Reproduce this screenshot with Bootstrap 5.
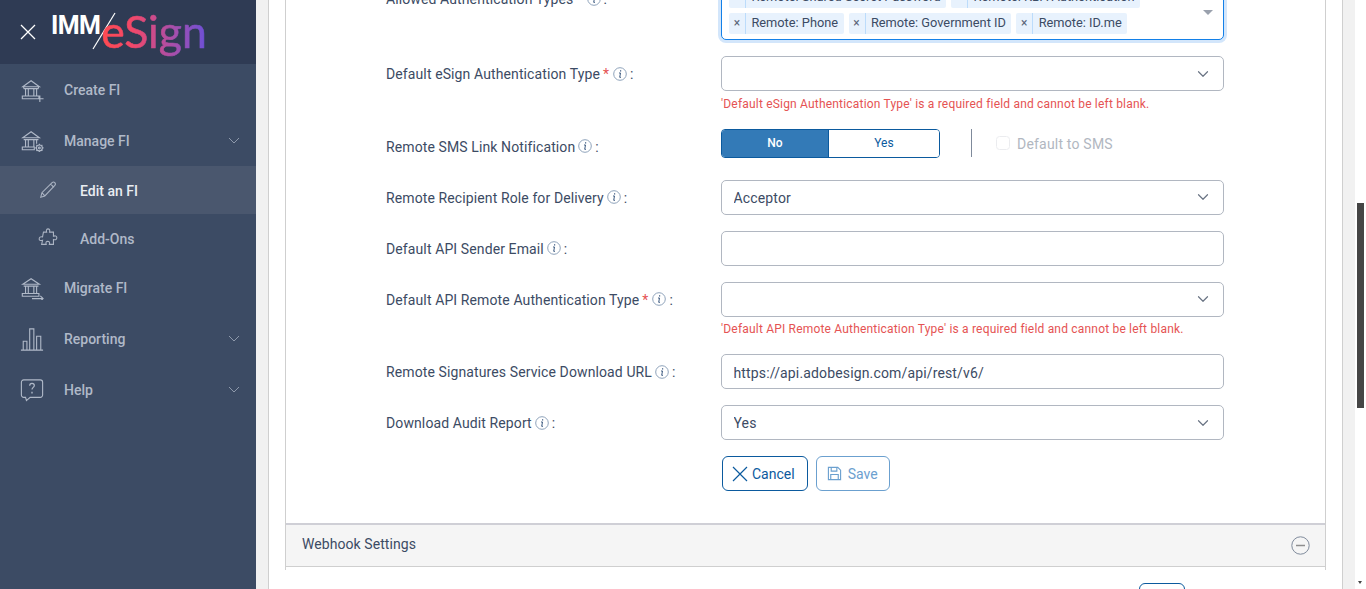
<!DOCTYPE html>
<html lang="en">
<head>
<meta charset="utf-8">
<title>IMM eSign</title>
<link href="https://cdn.jsdelivr.net/npm/bootstrap@5.3.0/dist/css/bootstrap.min.css" rel="stylesheet">
<style>
html,body{height:100%;overflow:hidden;margin:0}
body{font-family:Roboto,"Liberation Sans",sans-serif;font-size:14px;color:#3c4b64;background:#fff}
.shell{height:589px;overflow:hidden}
.side{width:256px;flex:none;background:#3c4b64;color:#b0b9c8}
.side-head{height:64px;background:#2f3b54;padding-left:20px;gap:15px}
.logo-imm{font-family:Roboto,sans-serif;font-weight:700;font-size:25px;color:#fff;letter-spacing:-.6px;line-height:1;margin-top:-14px}
.logo-slash{margin:-3px -15px 0 -8px;flex:none}
.logo-es{font-family:Lato,Roboto,sans-serif;font-size:44.500px;line-height:1;font-weight:400;background:linear-gradient(90deg,#ff4a50 0%,#f2486a 30%,#a44fae 70%,#6c50d8 100%);-webkit-background-clip:text;background-clip:text;color:transparent;-webkit-text-stroke:.6px transparent;margin-top:4px;padding-bottom:6px}
.menu-item{height:51px;padding:2px 16px 0 20px;font-weight:500;color:#b0b9c8}
.menu-item .ico{width:24px;height:24px;flex:none;margin:-2px 20px 0 0}
.menu-sub{height:48px;padding-left:38px}
.menu-sub .ico{width:20px;height:20px;margin-right:22px}
.menu-cur{background:#4a576e;color:#e9edf2}
.chev{width:12px;height:7px;margin:-2px 0 0 auto}
.work{flex:1 1 auto;min-width:0;background:#f1f1f1;padding:0 12px;overflow:hidden}
.sheet{background:#fff;border-left:1px solid #cfcfcf;border-right:1px solid #cfcfcf;height:589px;padding:0 16px;overflow:hidden}
.pane{border-left:1px solid #cfcfcf;border-right:1px solid #cfcfcf;height:589px}
.form-zone{padding:0 0 32px 100px;margin-top:-19px}
.f-row{display:flex;margin-bottom:16px;align-items:flex-start}
.f-label{width:335px;flex:none;min-height:35px;padding-top:2px;display:flex;align-items:center;color:#3c4b64;white-space:nowrap;letter-spacing:.11px}
.f-field{width:503px;flex:none}
.req{color:#e55353;margin:0 1px 0 3px}
.tip{width:14px;height:14px;margin:0 3px 2px 3px;flex:none}
.form-select,.form-control{height:35px;font-size:14px;color:#3c4b64;border-color:#b1b7c1;border-radius:5px;padding:2px 36px 0 11.500px;box-shadow:none;letter-spacing:.15px}
.form-select{background-image:url("data:image/svg+xml,%3csvg xmlns='http://www.w3.org/2000/svg' viewBox='0 0 16 16'%3e%3cpath fill='none' stroke='%236b7585' stroke-linecap='round' stroke-linejoin='round' stroke-width='1.6' d='m2 5 6 6 6-6'/%3e%3c/svg%3e")}
.form-control{padding-right:12px}
.err{color:#e55353;font-size:12px;line-height:18px;padding-top:3.500px;height:21.500px;letter-spacing:.19px}
.multi{border:1px solid #1380e8;border-radius:5px;box-shadow:0 0 0 3px #d3e6fb;padding:5px 7px;display:flex;flex-wrap:wrap;gap:5px;position:relative;background:#fff}
.tagx{display:flex;height:21px;background:#e8f2fd;border-radius:2px;font-size:12.800px;line-height:19.500px;color:#3c4b64}
.tagx i{font-style:normal;width:17px;text-align:center;border-right:1px solid #bcdcfb;color:#5a6578;font-size:12px;line-height:21px;flex:none}
.tagx span{padding:0 5.400px}
.caretx{position:absolute;right:10px;top:28px;width:0;height:0;border:5px solid transparent;border-top:5px solid #9aa1ad;border-bottom:0}
.swap{width:219px;height:29px;border:1px solid #0b5a9e;border-radius:4px;overflow:hidden}
.swap .btn{flex:1 0 auto;height:27px;padding:0;font-size:12px;border:0;border-radius:0;line-height:25px}
.swap .on{background:#337ab7;color:#fff;width:107px;flex:none;border-right:1px solid #0b5a9e;font-weight:500}
.swap .off{background:#fff;color:#0b5a9e;font-weight:400}
.vbar{width:1px;height:28px;background:#7f8a9b;margin:0 24px 0 31px}
.smsbox{color:#b1b7c1;font-size:14px;letter-spacing:.2px;padding-top:7px;gap:7px;height:29px}
.smsbox .form-check-input{width:14px;height:14px;margin:0;border-color:#d8dbe0;float:none}
.smsbox span{line-height:14px;padding-top:1px}
.act{height:35px;font-size:14px;background:#fff;border:1px solid #0b5a9e;color:#0b5a9e;border-radius:6px;padding:2px 12px 0 9px;display:inline-flex;align-items:center;gap:4px}
.act svg{flex:none;margin-top:-2px}
.act-off{border-color:#6ba0cf;color:#6ba0cf;width:74px;padding-left:10px;gap:6px}
.acc-head{height:44px;border-top:2px solid #cfcfd6;border-bottom:1px solid #cfcfcf;background:#f5f5f5;padding:0 15px 2px 16px;letter-spacing:.07px;color:#3c4b64}
.acc-head svg{margin-top:2px}
.peek{display:flex;justify-content:flex-end;padding:16px 140px 0 0}
.peek-btn{width:46px;height:40px;border:1px solid #0b5a9e;border-radius:6px;background:#fff}
.bar{width:11px;flex:none;background:#fff;padding-top:203px;position:relative}
.thumb{width:7px;height:205px;background:#454545;margin-left:2px}
.arrow{position:absolute;left:3px;bottom:5px;width:0;height:0;border:2.500px solid transparent;border-top:3px solid #454545;border-bottom:0}
.defs-holder{height:0}
</style>
</head>
<body>
<div class="shell d-flex">
  <aside class="side">
    <div class="side-head d-flex align-items-center">
      <svg width="16" height="16" viewBox="0 0 16 16" fill="none" stroke="#fff" stroke-width="1.3"><path d="M1 1l14 14M15 1L1 15"/></svg>
      <div class="d-flex align-items-center">
        <span class="logo-imm">IMM</span>
        <svg class="logo-slash" width="24" height="38" viewBox="0 0 24 38" fill="none" stroke="#fff" stroke-width="1.2"><path d="M23 1L1 37"/></svg>
        <span class="logo-es">eSign</span>
      </div>
    </div>
    <div class="menu-item d-flex align-items-center">
      <svg class="ico" viewBox="0 0 26 26" fill="none" stroke="#b0b9c8" stroke-width="1.200"><path d="M3 9.500L12 3l9 6.500zM4 11.500h16M4 9.500v2M20 9.500v2M6 12v7M9 12v7M15 12v7M18 12v7M2.500 19.500h18v3h-18zM21.500 19v7M18 22.500h7.500"/></svg>
      <span>Create FI</span>
    </div>
    <div class="menu-item d-flex align-items-center">
      <svg class="ico" viewBox="0 0 26 26" fill="none" stroke="#b0b9c8" stroke-width="1.200"><path d="M3 9.500L12 3l9 6.500zM4 11.500h16M6 12v7M9 12v7M15 12v7M18 12v4M2.500 19.500h13v3h-13z"/><circle cx="21" cy="20.500" r="3.200"/><circle cx="21" cy="20.500" r="1"/><path d="M21 16v1.300M21 23.700V25M16.500 20.500h1.300M24.200 20.500h1.300M17.800 17.300l1 1M23.200 22.700l1 1M17.800 23.700l1-1M23.200 18.300l1-1"/></svg>
      <span>Manage FI</span>
      <svg class="chev" viewBox="0 0 12 7" fill="none" stroke="#8e99ab" stroke-width="1"><path d="M1 1l5 5 5-5"/></svg>
    </div>
    <div class="menu-item menu-sub menu-cur d-flex align-items-center">
      <svg class="ico" viewBox="0 0 22 22" fill="none" stroke="#aab3c2" stroke-width="1.200"><path d="M3 19l1.300-5L15.500 3c1-1 2.200-1 3 0 .9.800.9 2 0 3L7.500 17.500zM4.300 14l3.200 3.500M14 4.500l3.500 3.500"/></svg>
      <span>Edit an FI</span>
    </div>
    <div class="menu-item menu-sub d-flex align-items-center">
      <svg class="ico" viewBox="0 0 22 22" fill="none" stroke="#aab3c2" stroke-width="1.200"><path d="M6 4.500h3.500C8.700 2 9.700 1 11 1s2.500 1 1.700 3.500H17v4.500c2.500-.8 3.700 0 3.700 1.800S19.500 13.500 17 12.700V18h-4.500c.8-2.500-.3-3.300-1.800-3.300S8.200 15.700 9 18H4l1-4.500C2.500 14.300 1.300 13.500 1.300 12S2.500 9 5 9.800z"/></svg>
      <span>Add-Ons</span>
    </div>
    <div class="menu-item d-flex align-items-center">
      <svg class="ico" viewBox="0 0 26 26" fill="none" stroke="#b0b9c8" stroke-width="1.200"><path d="M3 9L12 3l9 6zM4 11h16M6 11.500v7M9 11.500v7M15 11.500v7M18 11.500v7M2.500 19h18v3h-18zM13 24.500h12M22 21.500l3 3-3 3"/></svg>
      <span>Migrate FI</span>
    </div>
    <div class="menu-item d-flex align-items-center">
      <svg class="ico" viewBox="0 0 26 26" fill="none" stroke="#b0b9c8" stroke-width="1.200"><path d="M1 25h24M3.500 24.500v-9h4v9M10.500 24.500V2h4.500v22.500M18 24.500V10h4.500v14.500"/></svg>
      <span>Reporting</span>
      <svg class="chev" viewBox="0 0 12 7" fill="none" stroke="#8e99ab" stroke-width="1"><path d="M1 1l5 5 5-5"/></svg>
    </div>
    <div class="menu-item d-flex align-items-center">
      <svg class="ico" viewBox="0 0 26 26" fill="none" stroke="#b0b9c8" stroke-width="1.200"><path d="M4 2h18a2.500 2.500 0 0 1 2.500 2.500v14a2.500 2.500 0 0 1-2.500 2.500H11l-4 3.500-1-3.500H4a2.500 2.500 0 0 1-2.500-2.500v-14A2.500 2.500 0 0 1 4 2z"/><path d="M10.500 8.500c0-2 1.200-2.700 2.500-2.700s2.500 .8 2.500 2.300c0 2-2.500 2.200-2.500 4.400" stroke-width="1.300"/><path d="M13 15v1.800" stroke-width="1.500"/></svg>
      <span>Help</span>
      <svg class="chev" viewBox="0 0 12 7" fill="none" stroke="#8e99ab" stroke-width="1"><path d="M1 1l5 5 5-5"/></svg>
    </div>
  </aside>

  <main class="work">
    <div class="sheet">
      <div class="pane">
        <form class="form-zone">
          <div class="f-row">
            <label class="f-label">Allowed Authentication Types<span class="req">*</span><svg class="tip" viewBox="0 0 14 14"><use href="#info"/></svg>:</label>
            <div class="f-field">
              <div class="multi">
                <div class="tagx"><i>×</i><span>Remote: Shared Secret Password</span></div>
                <div class="tagx"><i>×</i><span>Remote: KBA Authentication</span></div>
                <div class="tagx"><i>×</i><span>Remote: Phone</span></div>
                <div class="tagx"><i>×</i><span>Remote: Government ID</span></div>
                <div class="tagx"><i>×</i><span>Remote: ID.me</span></div>
                <b class="caretx"></b>
              </div>
            </div>
          </div>
          <div class="f-row mb-0">
            <label class="f-label">Default eSign Authentication Type<span class="req">*</span><svg class="tip" viewBox="0 0 14 14"><use href="#info"/></svg>:</label>
            <div class="f-field">
              <select class="form-select"><option></option></select>
              <div class="err">'Default eSign Authentication Type' is a required field and cannot be left blank.</div>
            </div>
          </div>
          <div class="f-row" style="margin-top:16px">
            <label class="f-label">Remote SMS Link Notification<svg class="tip" viewBox="0 0 14 14"><use href="#info"/></svg>:</label>
            <div class="f-field d-flex align-items-start" style="height:35px">
              <div class="swap d-flex"><button type="button" class="btn on">No</button><button type="button" class="btn off">Yes</button></div>
              <div class="vbar"></div>
              <div class="smsbox d-flex align-items-start"><input class="form-check-input" type="checkbox" disabled aria-label="Default to SMS"><span>Default to SMS</span></div>
            </div>
          </div>
          <div class="f-row">
            <label class="f-label">Remote Recipient Role for Delivery<svg class="tip" viewBox="0 0 14 14"><use href="#info"/></svg>:</label>
            <div class="f-field"><select class="form-select"><option>Acceptor</option></select></div>
          </div>
          <div class="f-row">
            <label class="f-label">Default API Sender Email<svg class="tip" viewBox="0 0 14 14"><use href="#info"/></svg>:</label>
            <div class="f-field"><input class="form-control" type="text"></div>
          </div>
          <div class="f-row mb-0">
            <label class="f-label">Default API Remote Authentication Type<span class="req">*</span><svg class="tip" viewBox="0 0 14 14"><use href="#info"/></svg>:</label>
            <div class="f-field">
              <select class="form-select"><option></option></select>
              <div class="err">'Default API Remote Authentication Type' is a required field and cannot be left blank.</div>
            </div>
          </div>
          <div class="f-row" style="margin-top:16px">
            <label class="f-label">Remote Signatures Service Download URL<svg class="tip" viewBox="0 0 14 14"><use href="#info"/></svg>:</label>
            <div class="f-field"><input class="form-control" type="text" value="https://api.adobesign.com/api/rest/v6/"></div>
          </div>
          <div class="f-row">
            <label class="f-label">Download Audit Report<svg class="tip" viewBox="0 0 14 14"><use href="#info"/></svg>:</label>
            <div class="f-field"><select class="form-select"><option>Yes</option></select></div>
          </div>
          <div class="d-flex gap-2" style="padding-left:336px">
            <button type="button" class="act"><svg width="16" height="16" viewBox="0 0 16 16" fill="none" stroke="#0b5a9e" stroke-width="1.200"><path d="M1 1l14 14M15 1L1 15"/></svg>Cancel</button>
            <button type="button" class="act act-off"><svg width="15" height="15" viewBox="0 0 16 16" fill="none" stroke="#6ba0cf" stroke-width="1.200"><path d="M1.500 1.500h10l3 3v10h-13zM4.500 1.500v4h6v-4M4 14.500V9h8v5.500"/></svg>Save</button>
          </div>
        </form>
        <div class="acc-head d-flex align-items-center justify-content-between">
          <span>Webhook Settings</span>
          <svg width="19" height="19" viewBox="0 0 19 19" fill="none"><circle cx="9.500" cy="9.500" r="8.700" stroke="#7f8a9b" stroke-width="1"/><path d="M5 9.500h9" stroke="#8e8e8e" stroke-width="1.500"/></svg>
        </div>
        <div class="peek"><div class="peek-btn"></div></div>
      </div>
    </div>
  </main>
  <div class="bar"><div class="thumb"></div><b class="arrow"></b></div>
</div>
<svg width="0" height="0" class="d-block defs-holder" aria-hidden="true"><defs><g id="info" fill="none"><circle cx="7" cy="7" r="6.300" stroke="#8fa3bb" stroke-width="1"/><path d="M7.600 3.200v1.200" stroke="#3c5a80" stroke-width="1.200"/><path d="M6 6h1.500L6.700 10.300h1.300" stroke="#3c5a80" stroke-width="1"/></g></defs></svg>
</body>
</html>
